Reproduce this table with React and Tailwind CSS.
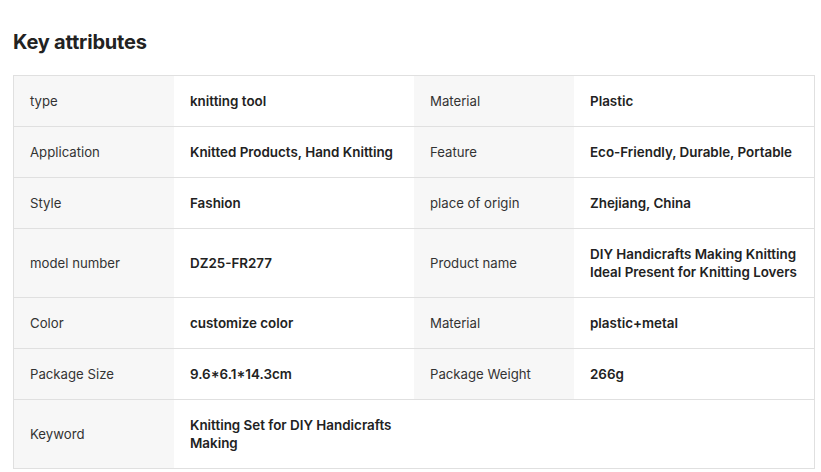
import React from "react";

const rows = [
  ["type", "knitting tool", "Material", "Plastic"],
  ["Application", "Knitted Products, Hand Knitting", "Feature", "Eco-Friendly, Durable, Portable"],
  ["Style", "Fashion", "place of origin", "Zhejiang, China"],
  ["model number", "DZ25-FR277", "Product name", "DIY Handicrafts Making Knitting Ideal Present for Knitting Lovers"],
  ["Color", "customize color", "Material", "plastic+metal"],
  ["Package Size", "9.6*6.1*14.3cm", "Package Weight", "266g"],
  ["Keyword", "Knitting Set for DIY Handicrafts Making", "", ""],
];

export default function App() {
  return (
    <div className="bg-white w-[821px] h-[472px] overflow-hidden pl-[13px] pt-[28px]" style={{ fontFamily: "Inter, 'Noto Sans', sans-serif" }}>
      <h2 className="text-[20px] leading-[28px] font-bold text-[#222] tracking-[-0.2px]">Key attributes</h2>
      <div className="mt-[19px] w-[802px] border border-[#e0e0e0]">
        {rows.map((r, i) => (
          <div key={i} className={`grid grid-cols-[160px_240px_160px_240px] ${i > 0 ? "border-t border-[#e0e0e0]" : ""}`}>
            <div className="bg-[#f7f7f7] px-4 py-4 text-[13.2px] leading-[18px] text-[#333] flex items-center">{r[0]}</div>
            <div className="px-4 py-4 text-[13.4px] leading-[18px] text-[#222] font-semibold flex items-center">{r[1]}</div>
            {r[2] ? (
              <div className="bg-[#f7f7f7] px-4 py-4 text-[13.2px] leading-[18px] text-[#333] flex items-center">{r[2]}</div>
            ) : (
              <div />
            )}
            <div className="px-4 py-4 text-[13.4px] leading-[18px] text-[#222] font-semibold flex items-center">{r[3]}</div>
          </div>
        ))}
      </div>
    </div>
  );
}
